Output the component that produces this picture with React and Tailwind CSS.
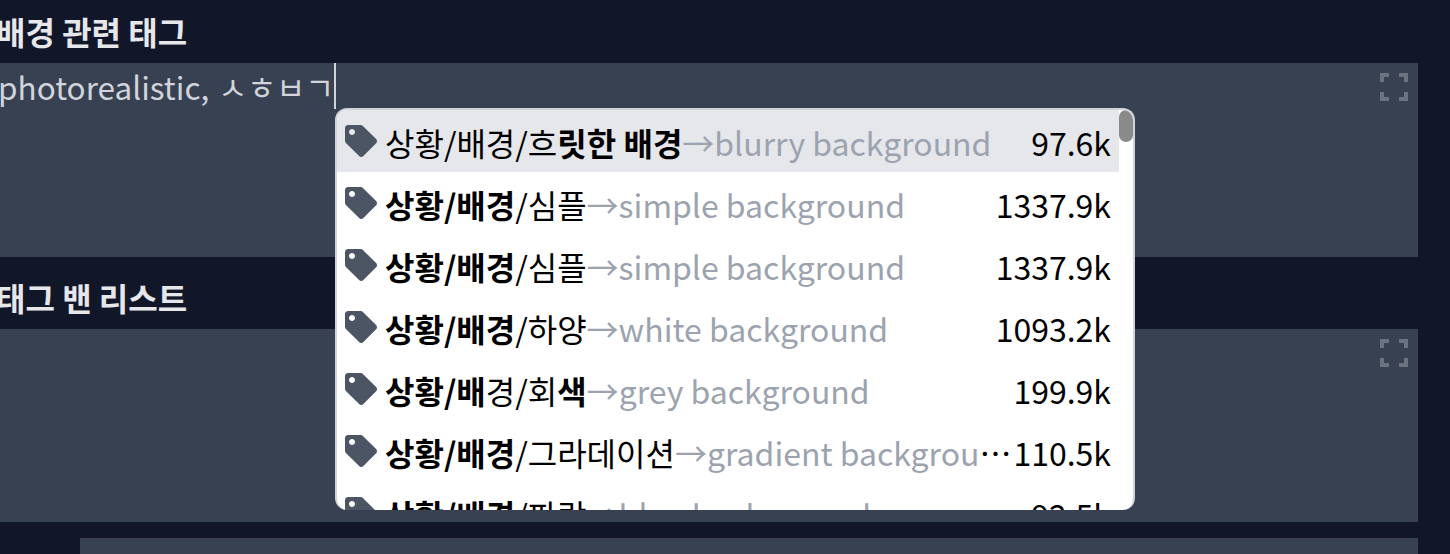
import { FaTag } from "react-icons/fa";

const rows = [
  { parts: [["상황/배경/흐", 0], ["릿한 배경", 1]], en: "blurry background", n: "97.6k", active: true },
  { parts: [["상황/배경", 1], ["/심플", 0]], en: "simple background", n: "1337.9k" },
  { parts: [["상황/배경", 1], ["/심플", 0]], en: "simple background", n: "1337.9k" },
  { parts: [["상황/배경", 1], ["/하양", 0]], en: "white background", n: "1093.2k" },
  { parts: [["상황/배", 1], ["경/회", 0], ["색", 1]], en: "grey background", n: "199.9k" },
  { parts: [["상황/배경", 1], ["/그라데이션", 0]], en: "gradient background", n: "110.5k" },
  { parts: [["상황/배경", 1], ["/파랑", 0]], en: "blue background", n: "92.5k" },
];

function Expand() {
  return (
    <svg width="28" height="28" viewBox="0 0 28 28" fill="none" stroke="#6b7280" strokeWidth="4" className="absolute right-[10px] top-[10px]">
      <path d="M2 9V2H9M19 2H26V9M26 19V26H19M9 26H2V19" />
    </svg>
  );
}

export default function App() {
  return (
    <div className="relative h-[554px] w-[1450px] overflow-hidden bg-[#111729] pr-8 font-['Noto_Sans_CJK_KR','Noto_Sans',sans-serif]">
      <h2 className="-ml-[4px] h-[63px] pt-[11px] text-[32px] leading-[40px] font-bold text-[#e5e7eb]">배경 관련 태그</h2>
      <div className="relative h-[194px] bg-[#374151]">
        <div className="flex h-[46px] items-center text-[31.5px] leading-[46px] text-[#d1d5db]">
          <span className="-ml-[2px]">photorealistic, <span className="ml-[2px]">ㅅㅎㅂㄱ</span></span>
          <span className="h-[46px] w-[2px] bg-[#d1d5db]" />
        </div>
        <Expand />
      </div>
      <h2 className="-ml-[4px] h-[72px] pt-[20px] text-[32px] leading-[40px] font-bold text-[#e5e7eb]">태그 밴 리스트</h2>
      <div className="relative h-[193px] bg-[#374151]">
        <Expand />
      </div>
      <div className="mt-4 ml-20 h-10 bg-[#374151]" />

      <div className="absolute top-[108px] left-[335px] h-[402px] w-[800px] overflow-hidden rounded-xl border-2 border-b-0 border-[#d1d5db] bg-white text-[32px] text-black">
        <div className="absolute top-0 right-0 h-8 w-[14px] rounded-[7px] bg-[#8a8a8a]" />
        {rows.map((r, i) => (
          <div key={i} className={`flex h-[62px] w-[782px] items-center pr-2 pl-2 ${r.active ? "bg-[#e5e7eb]" : ""}`}>
            <FaTag className="mr-2 h-8 w-8 shrink-0 text-[#4b5563]" />
            <span className="min-w-0 flex-1 truncate pt-[2px] leading-[62px]">
              {r.parts.map(([t, b], j) => (
                <span key={j} className={b ? "font-bold" : ""}>{t}</span>
              ))}
              <span className="text-[#9ca3af]">→{r.en}</span>
            </span>
            <span className="shrink-0 pt-[2px] leading-[62px]">{r.n}</span>
          </div>
        ))}
      </div>
    </div>
  );
}
